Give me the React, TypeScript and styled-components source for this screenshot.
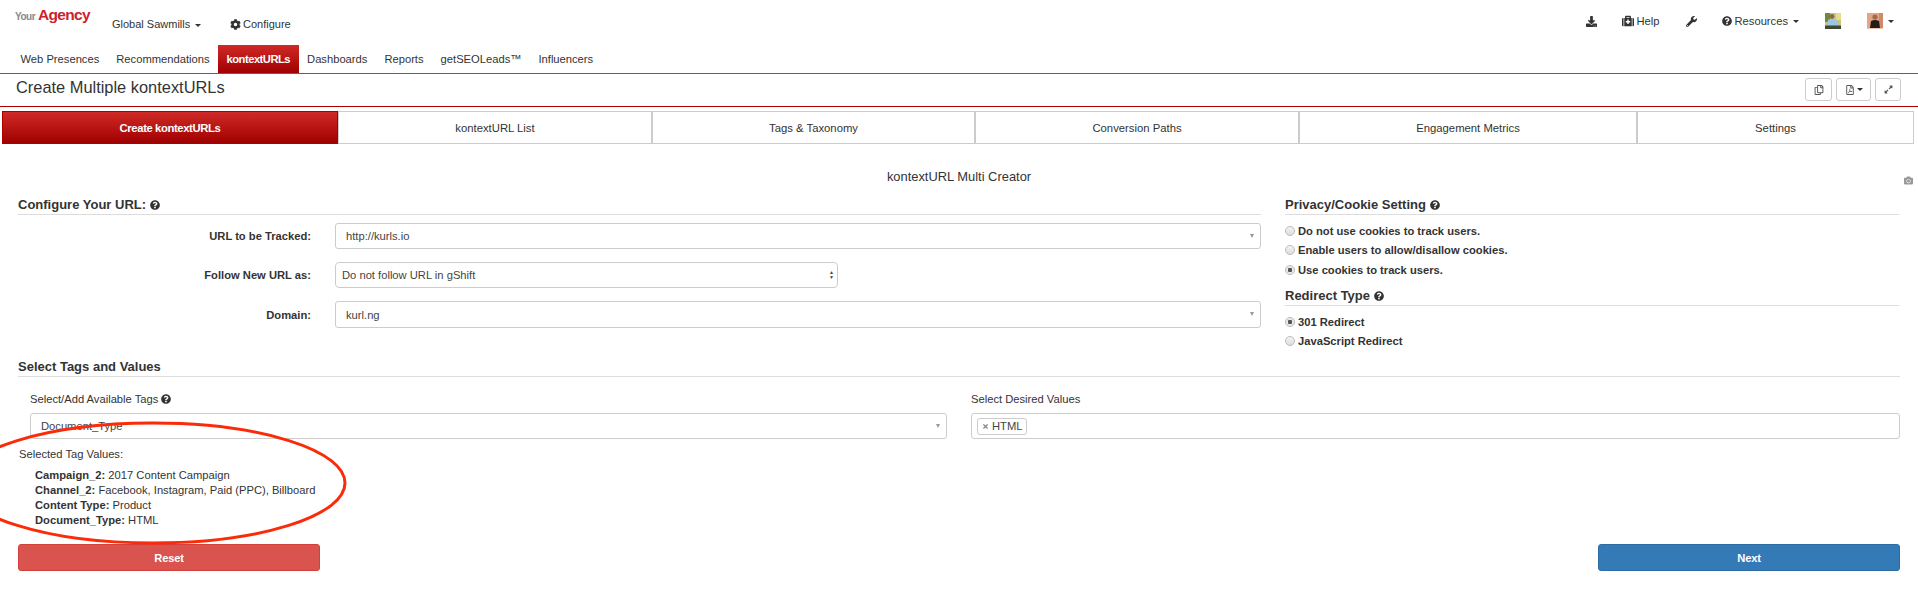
import React from "react";
import styled, { createGlobalStyle } from "styled-components";
import {
  FaCamera,
  FaCog,
  FaDownload,
  FaExpandAlt,
  FaMedkit,
  FaQuestionCircle,
  FaRegCopy,
  FaRegFilePdf,
  FaTimes,
  FaWrench,
} from "react-icons/fa";

const GlobalStyle = createGlobalStyle`
  html, body {
    margin: 0;
    padding: 0;
    background: #fff;
  }
  body {
    font-family: "Liberation Sans", Arial, sans-serif;
    font-size: 11.2px;
    color: #333;
  }
  * {
    box-sizing: border-box;
  }
`;

const navItems = ["Web Presences", "Recommendations", "kontextURLs", "Dashboards", "Reports", "getSEOLeads™", "Influencers"];
const tabs = ["Create kontextURLs", "kontextURL List", "Tags & Taxonomy", "Conversion Paths", "Engagement Metrics", "Settings"];
const tagValues = [
  { name: "Campaign_2:", value: "2017 Content Campaign" },
  { name: "Channel_2:", value: "Facebook, Instagram, Paid (PPC), Billboard" },
  { name: "Content Type:", value: "Product" },
  { name: "Document_Type:", value: "HTML" },
];

export default function App() {
  return (
    <>
      <GlobalStyle />
      <Page>
        <TopBar>
          <Logo>
            <LogoYour>Your</LogoYour>
            <LogoAgency>Agency</LogoAgency>
          </Logo>
          <AccountMenu>
            Global Sawmills <Caret />
          </AccountMenu>
          <ConfigureLink>
            <FaCog size={11} /> Configure
          </ConfigureLink>
          <TopRight>
            <TopIcon $right={25}>
              <FaDownload size={11} />
            </TopIcon>
            <TopIcon $right={26}>
              <FaMedkit size={12} /> Help
            </TopIcon>
            <TopIcon $right={25}>
              <FaWrench size={11} />
            </TopIcon>
            <TopIcon $right={26}>
              <FaQuestionCircle size={10} /> Resources <Caret />
            </TopIcon>
            <TopIcon $right={26}>
              <Avatar viewBox="0 0 16 16">
                <rect width="16" height="16" fill="#c9c67a" />
                <rect width="5" height="9" fill="#6f8a3f" />
                <rect x="11" width="5" height="7" fill="#e3dd8f" />
                <circle cx="7" cy="3.5" r="2.4" fill="#8a6a55" />
                <path d="M2 13 L3 7 Q7 5 12 7 L14 13 Z" fill="#9cc6e2" />
                <rect y="12.5" width="16" height="3.5" fill="#3f4a35" />
              </Avatar>
            </TopIcon>
            <TopIcon $right={0}>
              <Avatar viewBox="0 0 16 16">
                <rect width="16" height="16" fill="#e3a586" />
                <rect x="12" width="4" height="16" fill="#cf8a66" />
                <circle cx="8" cy="4" r="2.6" fill="#a8664a" />
                <path d="M3 15 L4 8 Q8 6 12 8 L13 15 Z" fill="#231d1c" />
                <rect y="15" width="16" height="1" fill="#f0c4aa" />
              </Avatar>
              <Caret $small />
            </TopIcon>
          </TopRight>
        </TopBar>

        <NavBar>
          {navItems.map((item) => (
            <NavItem key={item} $active={item === "kontextURLs"}>
              {item}
            </NavItem>
          ))}
        </NavBar>

        <TitleBar>
          <PageTitle>Create Multiple kontextURLs</PageTitle>
          <TitleTools>
            <ToolButton $width={27}>
              <FaRegCopy size={10} />
            </ToolButton>
            <ToolButton $width={35}>
              <FaRegFilePdf size={10} />
              <Caret $small />
            </ToolButton>
            <ToolButton $width={26}>
              <FaExpandAlt size={9} />
            </ToolButton>
          </TitleTools>
        </TitleBar>

        <TabRow>
          {tabs.map((tab, i) => (
            <Tab key={tab} $active={i === 0}>
              {tab}
            </Tab>
          ))}
        </TabRow>

        <CreatorTitle>
          kontextURL Multi Creator
          <CameraMark>
            <FaCamera size={9} />
          </CameraMark>
        </CreatorTitle>

        <FormColumns>
          <div>
            <SectionHeading>
              Configure Your URL: <FaQuestionCircle size={10} />
            </SectionHeading>
            <FieldRow>
              <FieldLabel>URL to be Tracked:</FieldLabel>
              <SelectBox>
                http://kurls.io
                <SelectArrow />
              </SelectBox>
            </FieldRow>
            <FieldRow>
              <FieldLabel>Follow New URL as:</FieldLabel>
              <NativeSelect>
                Do not follow URL in gShift
                <UpDown>
                  <span>▲</span>
                  <span>▼</span>
                </UpDown>
              </NativeSelect>
            </FieldRow>
            <FieldRow>
              <FieldLabel>Domain:</FieldLabel>
              <SelectBox $tall>
                kurl.ng
                <SelectArrow />
              </SelectBox>
            </FieldRow>
          </div>
          <div>
            <SectionHeading>
              Privacy/Cookie Setting <FaQuestionCircle size={10} />
            </SectionHeading>
            <RadioList>
              <RadioRow>
                <Radio />
                Do not use cookies to track users.
              </RadioRow>
              <RadioRow>
                <Radio />
                Enable users to allow/disallow cookies.
              </RadioRow>
              <RadioRow>
                <Radio $checked />
                Use cookies to track users.
              </RadioRow>
            </RadioList>
            <SectionHeading $second>
              Redirect Type <FaQuestionCircle size={10} />
            </SectionHeading>
            <RadioList>
              <RadioRow>
                <Radio $checked />
                301 Redirect
              </RadioRow>
              <RadioRow>
                <Radio />
                JavaScript Redirect
              </RadioRow>
            </RadioList>
          </div>
        </FormColumns>

        <TagsHeading>Select Tags and Values</TagsHeading>

        <TagColumns>
          <div>
            <TagLabel>
              Select/Add Available Tags <FaQuestionCircle size={10} />
            </TagLabel>
            <SelectBox>
              Document_Type
              <SelectArrow />
            </SelectBox>
          </div>
          <div>
            <TagLabel>Select Desired Values</TagLabel>
            <MultiBox>
              <ValueChip>
                <FaTimes size={7} color="#888" /> HTML
              </ValueChip>
            </MultiBox>
          </div>
        </TagColumns>

        <SelectedTitle>Selected Tag Values:</SelectedTitle>
        <SelectedList>
          {tagValues.map((t) => (
            <div key={t.name}>
              <b>{t.name}</b> {t.value}
            </div>
          ))}
        </SelectedList>

        <Actions>
          <ActionButton $bg="#d9534f" $border="#d43f3a">Reset</ActionButton>
          <ActionButton $bg="#337ab7" $border="#2e6da4">Next</ActionButton>
        </Actions>

        <CircleNote viewBox="0 0 360 130" fill="none">
          <ellipse cx="153" cy="61" rx="192" ry="60" stroke="#fb2a08" strokeWidth="3" />
        </CircleNote>
      </Page>
    </>
  );
}

const Page = styled.div`
  position: relative;
  width: 1918px;
  height: 615px;
  overflow: hidden;
`;
const TopBar = styled.div`
  display: flex;
  align-items: flex-start;
  height: 45px;
  padding: 0 24px 0 15px;
`;
const Logo = styled.div`
  display: flex;
  align-items: baseline;
  width: 97px;
  padding-top: 6px;
  white-space: nowrap;
`;
const LogoYour = styled.span`
  font-size: 10px;
  font-weight: 700;
  letter-spacing: -0.5px;
  color: #888;
  margin-right: 3px;
`;
const LogoAgency = styled.span`
  font-size: 15.5px;
  font-weight: 700;
  letter-spacing: -0.7px;
  color: #cc2229;
`;
const AccountMenu = styled.div`
  width: 118px;
  padding-top: 18px;
  font-size: 11px;
  line-height: 13px;
  white-space: nowrap;
`;
const ConfigureLink = styled.div`
  display: flex;
  align-items: center;
  gap: 2px;
  padding-top: 18px;
  font-size: 11px;
  line-height: 13px;
  color: #333;
`;
const TopRight = styled.div`
  display: flex;
  align-items: center;
  margin-left: auto;
  height: 42px;
`;
const TopIcon = styled.div<{ $right: number }>`
  display: flex;
  align-items: center;
  gap: 3px;
  margin-right: ${(p) => p.$right}px;
  color: #333;
  white-space: nowrap;
`;
const Avatar = styled.svg`
  width: 16px;
  height: 16px;
  display: block;
`;
const Caret = styled.span<{ $small?: boolean }>`
  display: inline-block;
  margin-left: 2px;
  vertical-align: middle;
  border-top: ${(p) => (p.$small ? 3 : 3.5)}px solid #333;
  border-left: ${(p) => (p.$small ? 3 : 3.5)}px solid transparent;
  border-right: ${(p) => (p.$small ? 3 : 3.5)}px solid transparent;
`;
const NavBar = styled.div`
  display: flex;
  height: 29px;
  padding-left: 12px;
  border-bottom: 1px solid #c33;
`;
const NavItem = styled.div<{ $active?: boolean }>`
  display: flex;
  align-items: center;
  height: 28px;
  padding: 0 8.5px;
  white-space: nowrap;
  font-weight: ${(p) => (p.$active ? 700 : 400)};
  letter-spacing: ${(p) => (p.$active ? "-0.5px" : "0")};
  color: ${(p) => (p.$active ? "#fff" : "#333")};
  background: ${(p) => (p.$active ? "linear-gradient(#cf2a27, #a00000)" : "transparent")};
`;
const TitleBar = styled.div`
  display: flex;
  align-items: flex-start;
  justify-content: space-between;
  height: 33px;
  padding: 4px 17px 0 16px;
  border-bottom: 1px solid #a00;
`;
const PageTitle = styled.h1`
  margin: 0;
  font-size: 16.4px;
  line-height: 19px;
  font-weight: 400;
`;
const TitleTools = styled.div`
  display: flex;
  gap: 4px;
`;
const ToolButton = styled.div<{ $width: number }>`
  display: flex;
  align-items: center;
  justify-content: center;
  width: ${(p) => p.$width}px;
  height: 23px;
  color: #555;
  border: 1px solid #ccc;
  border-radius: 3px;
`;
const TabRow = styled.div`
  display: grid;
  grid-template-columns: 336px 314px 323px 324px 338px 277px;
  margin: 4px 0 0 2px;
`;
const Tab = styled.div<{ $active?: boolean }>`
  display: flex;
  align-items: center;
  justify-content: center;
  height: 33px;
  font-size: 11.3px;
  color: ${(p) => (p.$active ? "#fff" : "#333")};
  font-weight: ${(p) => (p.$active ? 700 : 400)};
  letter-spacing: ${(p) => (p.$active ? "-0.4px" : "0")};
  background: ${(p) => (p.$active ? "linear-gradient(#cf2a27, #a00000)" : "#fff")};
  border: 1px solid ${(p) => (p.$active ? "#a00" : "#ccc")};
`;
const CreatorTitle = styled.div`
  position: relative;
  height: 46px;
  padding-top: 26px;
  text-align: center;
  font-size: 12.9px;
  line-height: 14px;
`;
const CameraMark = styled.span`
  position: absolute;
  right: 5px;
  top: 30px;
  color: #999;
`;
const FormColumns = styled.div`
  display: grid;
  grid-template-columns: 1243px 614px;
  gap: 24px;
  padding: 0 18px 0 18px;
  height: 162px;
  margin-top: 7px;
`;
const SectionHeading = styled.div<{ $second?: boolean }>`
  display: flex;
  align-items: center;
  gap: 4px;
  height: 18px;
  margin-top: ${(p) => (p.$second ? 11 : 0)}px;
  padding-bottom: 2px;
  font-size: 13px;
  font-weight: 700;
  border-bottom: 1px solid #ddd;
`;
const FieldRow = styled.div`
  display: grid;
  grid-template-columns: 293px 1fr;
  gap: 24px;
  align-items: center;
  margin-top: 13px;
  &:nth-of-type(2) {
    margin-top: 8px;
  }
`;
const FieldLabel = styled.div`
  text-align: right;
  font-weight: 700;
`;
const SelectBox = styled.div<{ $tall?: boolean }>`
  position: relative;
  display: flex;
  align-items: center;
  height: ${(p) => (p.$tall ? 27 : 26)}px;
  padding-left: 10px;
  border: 1px solid #ccc;
  border-radius: 3px;
  color: #444;
  background: #fff;
`;
const SelectArrow = styled.span`
  position: absolute;
  right: 6px;
  top: 10px;
  border-top: 4px solid #999;
  border-left: 2.5px solid transparent;
  border-right: 2.5px solid transparent;
`;
const NativeSelect = styled.div`
  display: flex;
  align-items: center;
  justify-content: space-between;
  width: 503px;
  height: 26px;
  padding: 0 3px 0 6px;
  border: 1px solid #ccc;
  border-radius: 4px;
  color: #444;
`;
const UpDown = styled.span`
  display: flex;
  flex-direction: column;
  font-size: 5px;
  line-height: 5px;
  color: #444;
`;
const RadioList = styled.div`
  display: flex;
  flex-direction: column;
  gap: 5px;
  padding-top: 8.5px;
`;
const RadioRow = styled.div`
  display: flex;
  align-items: center;
  gap: 4px;
  height: 14.5px;
  font-weight: 700;
  white-space: nowrap;
`;
const Radio = styled.span<{ $checked?: boolean }>`
  display: inline-block;
  width: 10px;
  height: 10px;
  margin-right: -1px;
  border: 1px solid #bbb;
  border-radius: 50%;
  background: ${(p) => (p.$checked ? "radial-gradient(circle, #555 0 2px, #e8e8e8 2.5px)" : "linear-gradient(#f4f4f4, #ddd)")};
`;
const TagsHeading = styled(SectionHeading)`
  margin: 0 18px 0 18px;
`;
const TagColumns = styled.div`
  display: grid;
  grid-template-columns: 917px 929px;
  gap: 24px;
  padding: 0 18px 0 30px;
  margin-top: 15px;
`;
const TagLabel = styled.div`
  display: flex;
  align-items: center;
  gap: 3px;
  height: 14px;
  margin-bottom: 7px;
`;
const MultiBox = styled.div`
  display: flex;
  align-items: center;
  height: 26px;
  padding-left: 5px;
  border: 1px solid #ccc;
  border-radius: 3px;
`;
const ValueChip = styled.div`
  display: flex;
  align-items: center;
  gap: 3px;
  height: 17px;
  padding: 0 4px;
  border: 1px solid #ccc;
  border-radius: 3px;
  color: #444;
`;
const SelectedTitle = styled.div`
  margin: 8px 0 0 19px;
  line-height: 14px;
`;
const SelectedList = styled.div`
  margin: 7px 0 0 35px;
  line-height: 15px;
`;
const Actions = styled.div`
  display: flex;
  justify-content: space-between;
  padding: 0 18px 0 18px;
  margin-top: 16px;
`;
const ActionButton = styled.div<{ $bg: string; $border: string }>`
  display: flex;
  align-items: center;
  justify-content: center;
  width: 302px;
  height: 27px;
  color: #fff;
  font-weight: 700;
  letter-spacing: -0.2px;
  background: ${(p) => p.$bg};
  border: 1px solid ${(p) => p.$border};
  border-radius: 3px;
`;
const CircleNote = styled.svg`
  position: absolute;
  left: 0;
  top: 422px;
  width: 360px;
  height: 130px;
  overflow: visible;
  pointer-events: none;
`;
